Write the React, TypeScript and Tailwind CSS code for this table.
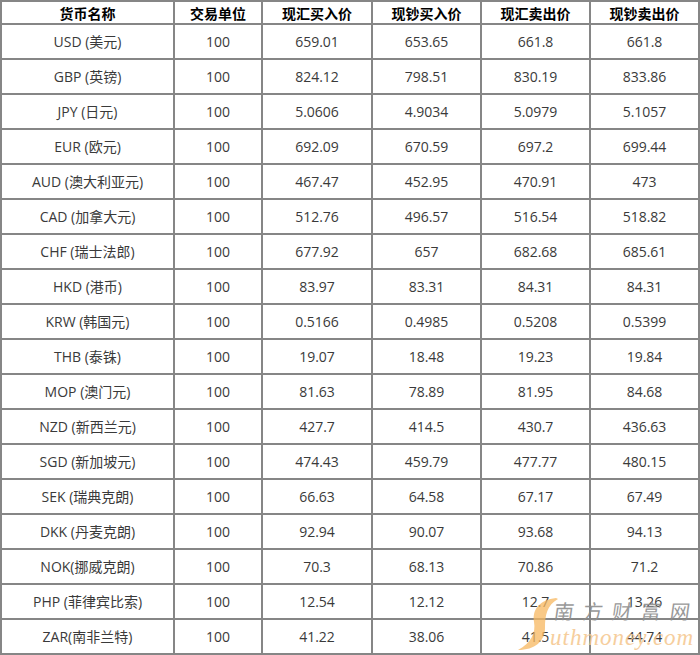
const rows: string[][] = [
  ['USD (美元)', '100', '659.01', '653.65', '661.8', '661.8'],
  ['GBP (英镑)', '100', '824.12', '798.51', '830.19', '833.86'],
  ['JPY (日元)', '100', '5.0606', '4.9034', '5.0979', '5.1057'],
  ['EUR (欧元)', '100', '692.09', '670.59', '697.2', '699.44'],
  ['AUD (澳大利亚元)', '100', '467.47', '452.95', '470.91', '473'],
  ['CAD (加拿大元)', '100', '512.76', '496.57', '516.54', '518.82'],
  ['CHF (瑞士法郎)', '100', '677.92', '657', '682.68', '685.61'],
  ['HKD (港币)', '100', '83.97', '83.31', '84.31', '84.31'],
  ['KRW (韩国元)', '100', '0.5166', '0.4985', '0.5208', '0.5399'],
  ['THB (泰铢)', '100', '19.07', '18.48', '19.23', '19.84'],
  ['MOP (澳门元)', '100', '81.63', '78.89', '81.95', '84.68'],
  ['NZD (新西兰元)', '100', '427.7', '414.5', '430.7', '436.63'],
  ['SGD (新加坡元)', '100', '474.43', '459.79', '477.77', '480.15'],
  ['SEK (瑞典克朗)', '100', '66.63', '64.58', '67.17', '67.49'],
  ['DKK (丹麦克朗)', '100', '92.94', '90.07', '93.68', '94.13'],
  ['NOK(挪威克朗)', '100', '70.3', '68.13', '70.86', '71.2'],
  ['PHP (菲律宾比索)', '100', '12.54', '12.12', '12.7', '13.26'],
  ['ZAR(南非兰特)', '100', '41.22', '38.06', '41.5', '44.74'],
]

const headers = ['货币名称', '交易单位', '现汇买入价', '现钞买入价', '现汇卖出价', '现钞卖出价']

const cols = 'grid grid-cols-[173px_88px_110px_109px_109px_109px]'

// site watermark sitting over the bottom-right cells
function Watermark() {
  return (
    <div className="pointer-events-none absolute left-[516px] top-[594px] h-[60px] w-[184px]">
      <svg width="44" height="56" viewBox="0 0 44 56" className="absolute left-0 top-[2px] opacity-75">
        <path
          d="M40 2 C24 4 16 13 18 26 C20 37 15 47 2 54 C19 54 29 45 29 32 C29 19 31 9 42 3 Z"
          fill="#f7b860"
        />
      </svg>
      <div className="absolute left-[38px] top-[7px] text-[20px] leading-none tracking-[9px] text-[#8f8f8f] opacity-90 [font-family:'Noto_Sans_CJK_SC',sans-serif] [transform:skewX(-8deg)]">
        南方财富网
      </div>
      <div className="absolute left-[34px] top-[32px] whitespace-nowrap text-[23px] italic leading-none tracking-[1px] text-[#f5c68c] opacity-85 [font-family:'Liberation_Serif',serif]">
        uthmoney.com
      </div>
    </div>
  )
}

export default function App() {
  return (
    <div className="relative h-[655px] w-[700px] overflow-hidden bg-white [font-family:'Open_Sans','Noto_Sans_CJK_SC',sans-serif]">
      <div className="border-l-2 border-t-2 border-[#868686]">
        <div className={cols}>
          {headers.map((h) => (
            <div
              key={h}
              className="flex h-[23px] items-center justify-center border-b-2 border-r-2 border-[#868686] pt-[1px] text-[14px] font-bold text-black"
            >
              {h}
            </div>
          ))}
        </div>
        {rows.map((r) => (
          <div key={r[0]} className={cols}>
            {r.map((c, i) => (
              <div
                key={i}
                className="flex h-[35px] items-center justify-center border-b-2 border-r-2 border-[#868686] text-[14px] text-[#3a3a3a]"
              >
                {c}
              </div>
            ))}
          </div>
        ))}
      </div>
      <Watermark />
    </div>
  )
}
